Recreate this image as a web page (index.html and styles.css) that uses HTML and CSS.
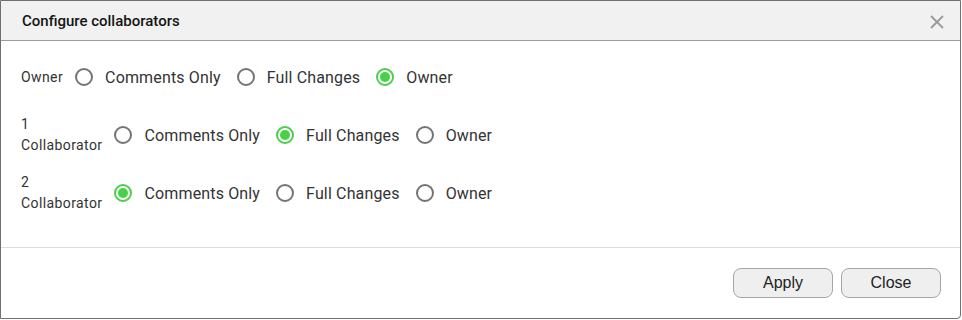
FILE: index.html
```html
<!DOCTYPE html>
<html lang="en">
<head>
  <meta charset="UTF-8" />
  <meta name="viewport" content="width=device-width, initial-scale=1.0"/>
  <title>Configure collaborators</title>
  <link rel="stylesheet" href="styles.css">
</head>
<body>
  <div class="dialog">
    <div class="header">
      <h2>Configure collaborators</h2>
      <span class="close">
        <svg width="14" height="14" viewBox="0 0 14 14">
          <path d="M1 1 L13 13 M13 1 L1 13" stroke="#9a9a9a" stroke-width="1.8" fill="none"/>
        </svg>
      </span>
    </div>

    <div class="content">
      <div class="row">
        <div class="who">Owner</div>
        <label class="opt"><input type="radio" name="r0"> Comments Only</label>
        <label class="opt"><input type="radio" name="r0"> Full Changes</label>
        <label class="opt"><input type="radio" name="r0" checked> Owner</label>
      </div>
      <div class="row">
        <div class="who">1<br>Collaborator</div>
        <label class="opt"><input type="radio" name="r1"> Comments Only</label>
        <label class="opt"><input type="radio" name="r1" checked> Full Changes</label>
        <label class="opt"><input type="radio" name="r1"> Owner</label>
      </div>
      <div class="row">
        <div class="who">2<br>Collaborator</div>
        <label class="opt"><input type="radio" name="r2" checked> Comments Only</label>
        <label class="opt"><input type="radio" name="r2"> Full Changes</label>
        <label class="opt"><input type="radio" name="r2"> Owner</label>
      </div>
    </div>

    <div class="footer">
      <button>Apply</button>
      <button>Close</button>
    </div>
  </div>
</body>
</html>
```

FILE: styles.css
```css
* {
  margin: 0;
  padding: 0;
  box-sizing: border-box;
}

body {
  background: #fff;
  font-family: Roboto, "Liberation Sans", sans-serif;
  width: 962px;
  height: 320px;
  overflow: hidden;
}

.dialog {
  width: 961px;
  height: 319px;
  border: 1px solid #6f6f6f;
  border-radius: 0 0 4px 0;
  display: flex;
  flex-direction: column;
  background: #fff;
}

.header {
  height: 40px;
  background: #f1f1f1;
  border-bottom: 1px solid #9c9c9c;
  display: flex;
  align-items: center;
  justify-content: space-between;
  padding: 0 16px 0 21px;
}

.header h2 {
  font-size: 15px;
  font-weight: 500;
  color: #151515;
}

.close {
  display: flex;
  margin-top: 2px;
}

.content {
  flex: 1;
  padding: 15px 20px 0 20px;
  display: flex;
  flex-direction: column;
  gap: 16px;
}

.row {
  min-height: 42px;
  display: flex;
  align-items: center;
}

.who {
  font-size: 14px;
  line-height: 21px;
  letter-spacing: 0.4px;
  color: #333;
  margin-right: 12px;
}

.opt {
  display: flex;
  align-items: center;
  font-size: 16px;
  letter-spacing: 0.15px;
  color: #333;
  margin-right: 16px;
  cursor: pointer;
}

.opt input {
  appearance: none;
  -webkit-appearance: none;
  width: 18px;
  height: 18px;
  border: 2px solid #747474;
  border-radius: 50%;
  margin-right: 12px;
  display: flex;
  align-items: center;
  justify-content: center;
}

.opt input:checked {
  border-color: #48d048;
}

.opt input:checked::after {
  content: "";
  width: 10px;
  height: 10px;
  border-radius: 50%;
  background: #48d048;
}

.footer {
  border-top: 1px solid #dedede;
  padding: 20px 19px 20px 0;
  display: flex;
  justify-content: flex-end;
  gap: 8px;
}

.footer button {
  width: 100px;
  height: 30px;
  border: 1px solid #a5a5a5;
  border-radius: 8px;
  background: #efefef;
  font-family: "Liberation Sans", Arial, sans-serif;
  font-size: 16px;
  color: #222;
  cursor: pointer;
}
```
